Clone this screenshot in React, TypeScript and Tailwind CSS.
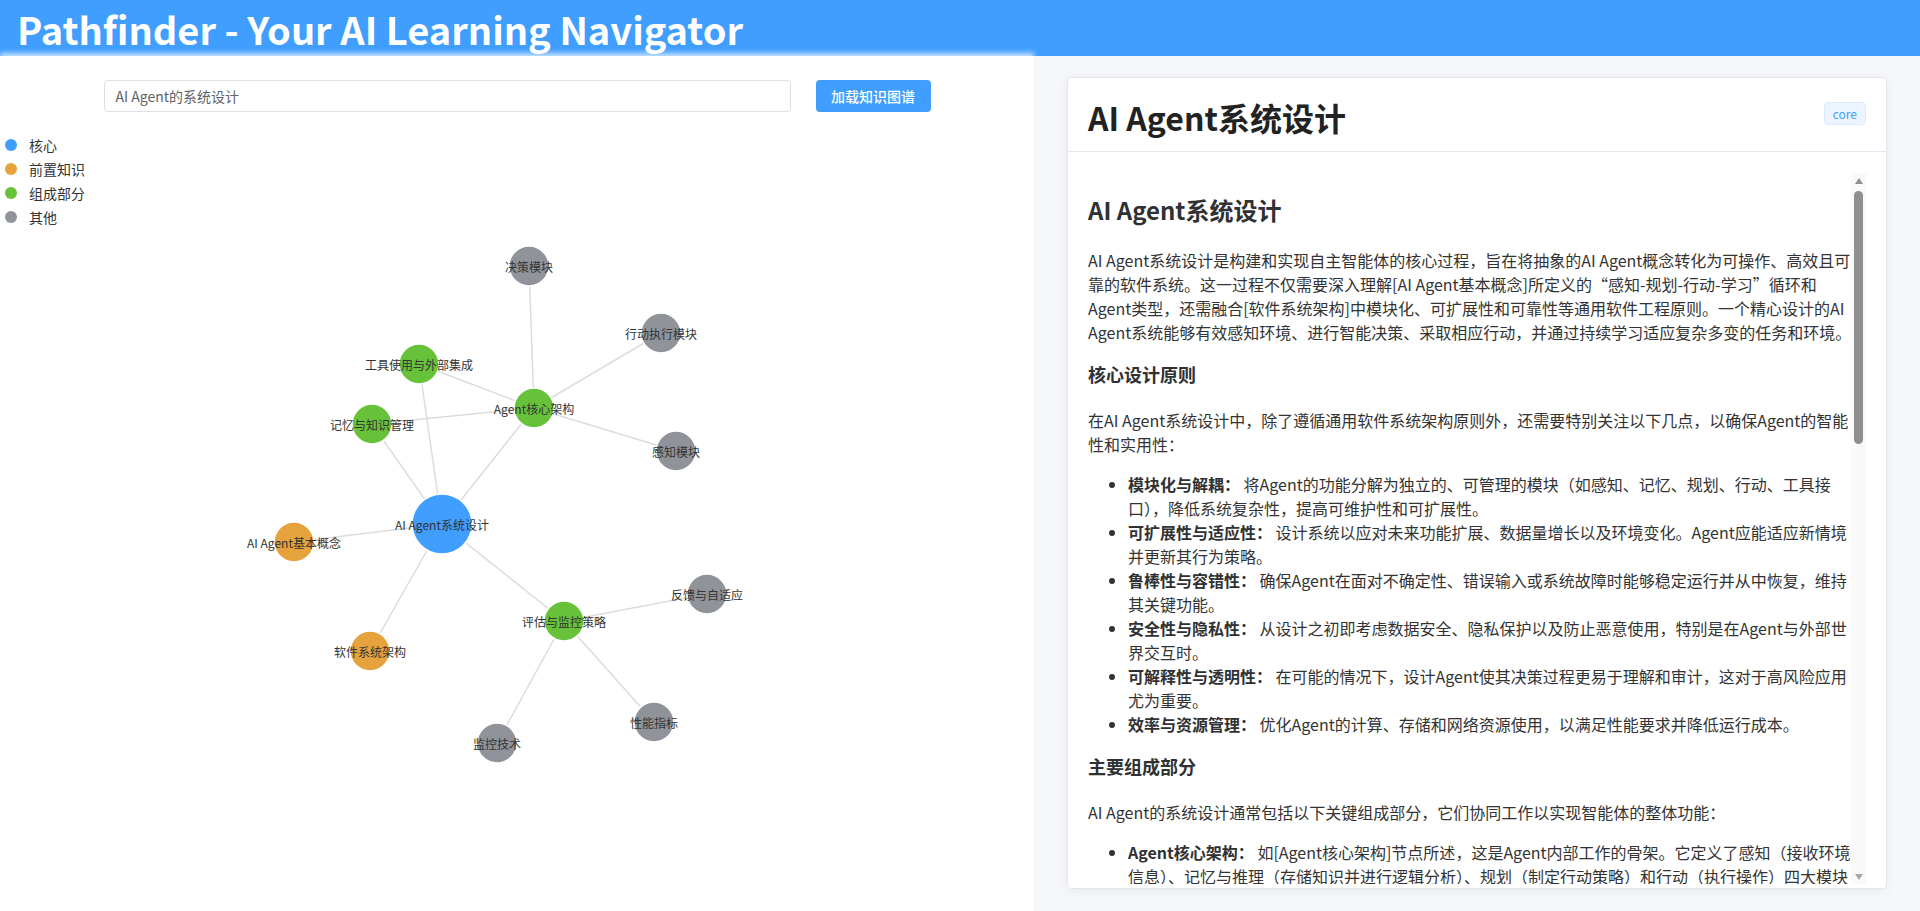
import React from "react";

type NodeT = { id: string; x: number; y: number; c: string; r?: number };

const BLUE = "#409eff";
const ORANGE = "#e6a23c";
const GREEN = "#67c23a";
const GRAY = "#909399";

const OFFSET_Y = 112;

const nodes: NodeT[] = [
  { id: "决策模块", x: 529, y: 266, c: GRAY },
  { id: "行动执行模块", x: 661, y: 333, c: GRAY },
  { id: "工具使用与外部集成", x: 419, y: 364, c: GREEN },
  { id: "Agent核心架构", x: 534, y: 408, c: GREEN },
  { id: "记忆与知识管理", x: 372, y: 424, c: GREEN },
  { id: "感知模块", x: 676, y: 451, c: GRAY },
  { id: "AI Agent系统设计", x: 442, y: 524, c: BLUE, r: 30 },
  { id: "AI Agent基本概念", x: 294, y: 542, c: ORANGE },
  { id: "评估与监控策略", x: 564, y: 621, c: GREEN },
  { id: "反馈与自适应", x: 707, y: 594, c: GRAY },
  { id: "软件系统架构", x: 370, y: 651, c: ORANGE },
  { id: "性能指标", x: 654, y: 722, c: GRAY },
  { id: "监控技术", x: 497, y: 743, c: GRAY },
];

const edges: [string, string][] = [
  ["决策模块", "Agent核心架构"],
  ["行动执行模块", "Agent核心架构"],
  ["感知模块", "Agent核心架构"],
  ["工具使用与外部集成", "Agent核心架构"],
  ["记忆与知识管理", "Agent核心架构"],
  ["Agent核心架构", "AI Agent系统设计"],
  ["工具使用与外部集成", "AI Agent系统设计"],
  ["记忆与知识管理", "AI Agent系统设计"],
  ["AI Agent基本概念", "AI Agent系统设计"],
  ["软件系统架构", "AI Agent系统设计"],
  ["评估与监控策略", "AI Agent系统设计"],
  ["反馈与自适应", "评估与监控策略"],
  ["性能指标", "评估与监控策略"],
  ["监控技术", "评估与监控策略"],
];

const byId = (id: string) => nodes.find((n) => n.id === id)!;

function Graph() {
  return (
    <svg className="absolute inset-0" width="1034" height="799">
      <g transform={`translate(0,${-OFFSET_Y})`}>
        {edges.map(([a, b], i) => {
          const s = byId(a);
          const t = byId(b);
          return (
            <line
              key={i}
              x1={s.x}
              y1={s.y}
              x2={t.x}
              y2={t.y}
              stroke="#dcdcdc"
              strokeWidth={1.5}
            />
          );
        })}
        {nodes.map((n) => (
          <circle
            key={n.id}
            cx={n.x}
            cy={n.y}
            r={n.r ?? 20}
            fill={n.c}
            stroke="#ffffff"
            strokeWidth={1.5}
          />
        ))}
        {nodes.map((n) => (
          <text
            key={"t" + n.id}
            x={n.x}
            y={n.y}
            textAnchor="middle"
            dominantBaseline="central"
            fontSize={12}
            fill="#333333"
            style={{ fontFamily: "'Noto Sans CJK SC', 'Noto Sans', sans-serif" }}
          >
            {n.id}
          </text>
        ))}
      </g>
    </svg>
  );
}

const legend = [
  { c: "bg-[#409eff]", t: "核心" },
  { c: "bg-[#e6a23c]", t: "前置知识" },
  { c: "bg-[#67c23a]", t: "组成部分" },
  { c: "bg-[#909399]", t: "其他" },
];

function Li({ b, children }: { b: string; children: React.ReactNode }) {
  return (
    <li>
      <strong className="font-bold text-[#303133]">{b}</strong> {children}
    </li>
  );
}

function Content() {
  return (
    <div className="w-[768px] text-base leading-6 text-[#333333]">
      <h2 className="mt-[19px] mb-5 text-2xl leading-9 font-bold text-[#303133]">AI Agent系统设计</h2>
      <p className="my-4">
        AI Agent系统设计是构建和实现自主智能体的核心过程，旨在将抽象的AI Agent概念转化为可操作、高效且可靠的软件系统。这一过程不仅需要深入理解[AI Agent基本概念]所定义的“感知-规划-行动-学习”循环和Agent类型，还需融合[软件系统架构]中模块化、可扩展性和可靠性等通用软件工程原则。一个精心设计的AI Agent系统能够有效感知环境、进行智能决策、采取相应行动，并通过持续学习适应复杂多变的任务和环境。
      </p>
      <h3 className="mt-4 mb-5 text-lg leading-7 font-bold text-[#303133]">核心设计原则</h3>
      <p className="my-4">
        在AI Agent系统设计中，除了遵循通用软件系统架构原则外，还需要特别关注以下几点，以确保Agent的智能性和实用性：
      </p>
      <ul className="my-4 pl-10 list-disc">
        <Li b="模块化与解耦：">将Agent的功能分解为独立的、可管理的模块（如感知、记忆、规划、行动、工具接口），降低系统复杂性，提高可维护性和可扩展性。</Li>
        <Li b="可扩展性与适应性：">设计系统以应对未来功能扩展、数据量增长以及环境变化。Agent应能适应新情境并更新其行为策略。</Li>
        <Li b="鲁棒性与容错性：">确保Agent在面对不确定性、错误输入或系统故障时能够稳定运行并从中恢复，维持其关键功能。</Li>
        <Li b="安全性与隐私性：">从设计之初即考虑数据安全、隐私保护以及防止恶意使用，特别是在Agent与外部世界交互时。</Li>
        <Li b="可解释性与透明性：">在可能的情况下，设计Agent使其决策过程更易于理解和审计，这对于高风险应用尤为重要。</Li>
        <Li b="效率与资源管理：">优化Agent的计算、存储和网络资源使用，以满足性能要求并降低运行成本。</Li>
      </ul>
      <h3 className="mt-4 mb-5 text-lg leading-7 font-bold text-[#303133]">主要组成部分</h3>
      <p className="my-4">AI Agent的系统设计通常包括以下关键组成部分，它们协同工作以实现智能体的整体功能：</p>
      <ul className="my-4 pl-10 list-disc">
        <Li b="Agent核心架构：">如[Agent核心架构]节点所述，这是Agent内部工作的骨架。它定义了感知（接收环境信息）、记忆与推理（存储知识并进行逻辑分析）、规划（制定行动策略）和行动（执行操作）四大模块之间的数据流与控制流。</Li>
        <Li b="记忆与知识管理：">负责短期上下文与长期知识的存储、检索与更新，常结合向量数据库与知识图谱，为推理与规划提供可靠的信息支撑。</Li>
      </ul>
    </div>
  );
}

function ScrollBar() {
  return (
    <div className="relative z-10 flex w-[15px] shrink-0 flex-col justify-between bg-[#f9f9f9]">
      <div className="flex h-[15px] items-center justify-center">
        <svg width="8" height="6" viewBox="0 0 8 6">
          <path d="M4 0 L8 6 L0 6 Z" fill="#8f8f8f" />
        </svg>
      </div>
      <div className="absolute top-[18px] left-[3px] h-[253px] w-[9px] rounded-full bg-[#8f8f8f]" />
      <div className="flex h-[15px] items-center justify-center">
        <svg width="8" height="6" viewBox="0 0 8 6">
          <path d="M0 0 L8 0 L4 6 Z" fill="#a8a8a8" />
        </svg>
      </div>
    </div>
  );
}

export default function App() {
  return (
    <div className="flex h-[911px] w-full flex-col overflow-hidden font-['Noto_Sans_CJK_SC','Noto_Sans',sans-serif]">
      <header className="flex h-[56px] shrink-0 items-center bg-[#409eff] pl-[17px]">
        <h1 className="pt-[2px] text-[38px] leading-none font-bold text-white">Pathfinder - Your AI Learning Navigator</h1>
      </header>
      <main className="flex min-h-0 flex-1">
        <section className="flex w-[1034px] shrink-0 flex-col bg-white shadow-[0_-3px_5px_rgba(255,255,255,0.7)]">
          <div className="flex justify-center gap-[25px] pt-6">
            <div className="flex h-8 w-[687px] items-center rounded-[4px] border border-[#dcdfe6] bg-white px-[11px] text-sm text-[#606266]">
              AI Agent的系统设计
            </div>
            <button className="h-8 w-[115px] rounded-[4px] bg-[#409eff] text-sm font-medium text-white">加载知识图谱</button>
          </div>
          <div className="relative flex-1">
            <Graph />
            <div className="absolute top-[21px] left-[5px] flex flex-col">
              {legend.map((l) => (
                <div key={l.t} className="flex h-6 items-center">
                  <span className={`h-3 w-3 rounded-full ${l.c}`} />
                  <span className="ml-3 text-sm text-[#333333]">{l.t}</span>
                </div>
              ))}
            </div>
          </div>
        </section>
        <section className="flex-1 bg-[#f5f7fa] pt-[21px] pl-[33px]">
          <div className="flex h-[812px] w-[820px] flex-col rounded-[4px] border border-[#e4e7ed] bg-white shadow-[0_2px_12px_0_rgba(0,0,0,0.06)]">
            <div className="flex h-[74px] shrink-0 items-start justify-between border-b border-[#e4e7ed] px-5 pt-5">
              <h1 className="text-[32px] leading-[38px] font-bold text-[#222222]">AI Agent系统设计</h1>
              <span className="mt-1 h-[23px] rounded-[4px] border border-[#d9ecff] bg-[#ecf5ff] px-2 text-xs leading-[21px] text-[#409eff]">core</span>
            </div>
            <div className="px-5 pt-[21px]">
              <div className="flex h-[711px]">
                <div className="-mr-[3px] min-w-0 flex-1 overflow-hidden">
                  <Content />
                </div>
                <ScrollBar />
              </div>
            </div>
          </div>
        </section>
      </main>
    </div>
  );
}
